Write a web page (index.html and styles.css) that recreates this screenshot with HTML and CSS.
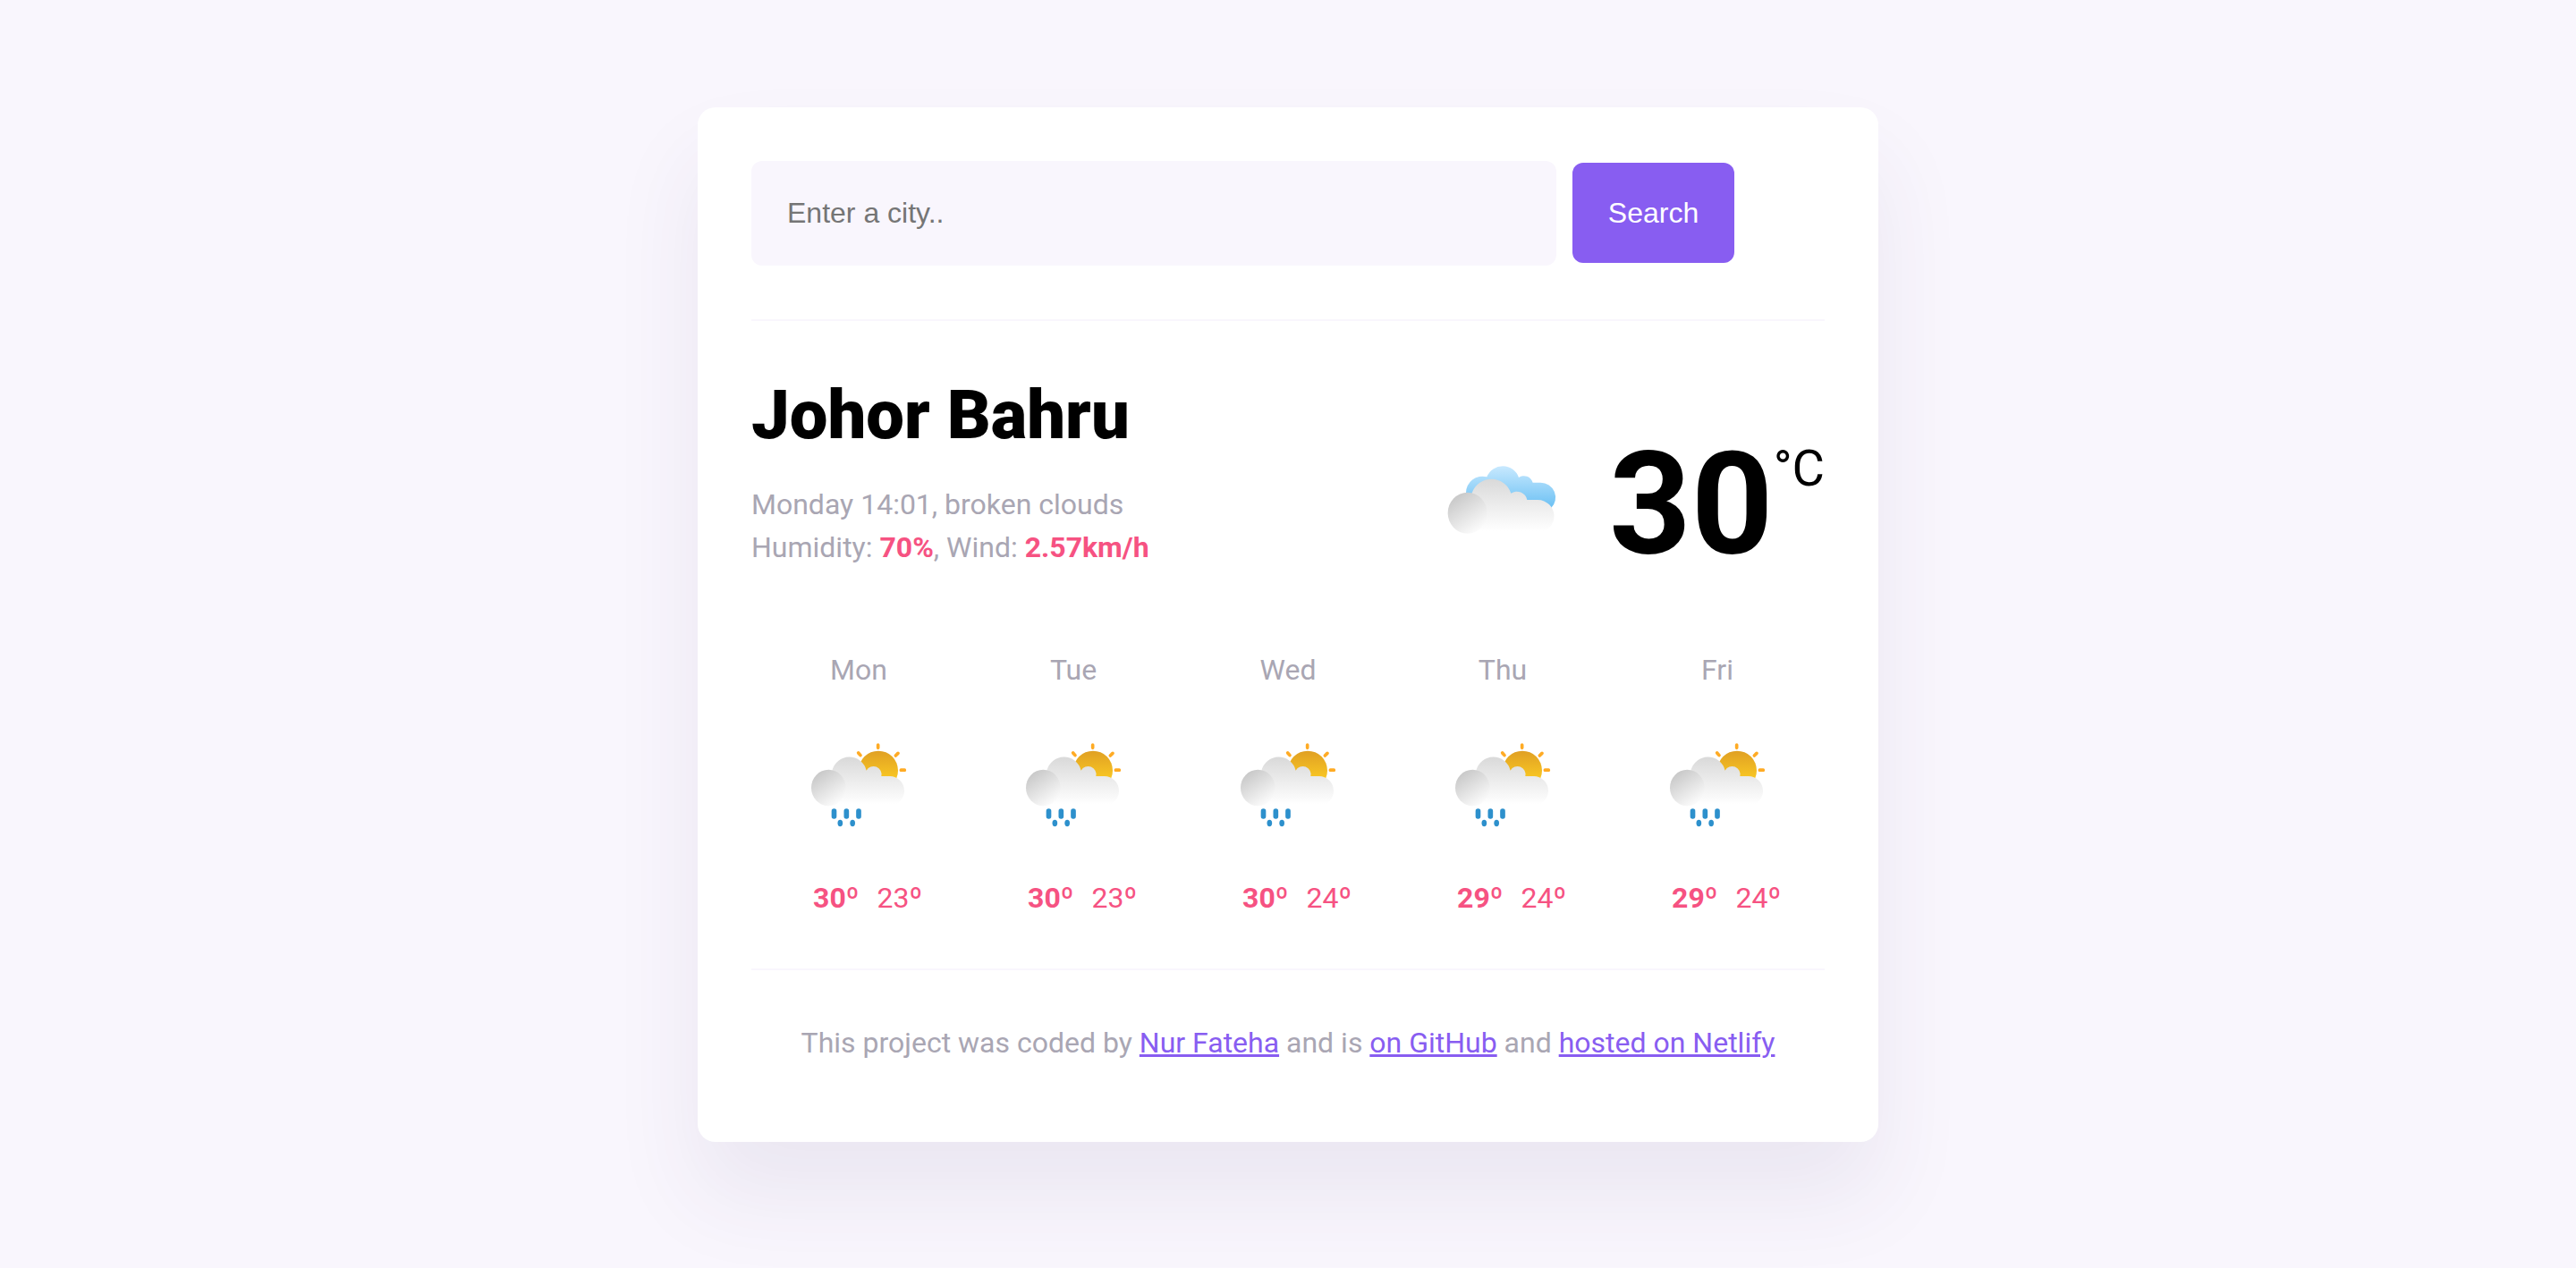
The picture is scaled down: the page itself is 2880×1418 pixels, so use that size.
FILE: index.html
```html
<!DOCTYPE html>
<html lang="en">
<head>
<meta charset="utf-8">
<title>Weather App</title>
<link rel="stylesheet" href="styles.css">
</head>
<body>
<svg class="defs" width="0" height="0" aria-hidden="true">
  <defs>
    <linearGradient id="puff" x1="0.2" y1="0.1" x2="0.75" y2="0.95"><stop offset="0" stop-color="#c9c9c9"/><stop offset="1" stop-color="#fcfcfc"/></linearGradient>
    <linearGradient id="cloud" gradientUnits="userSpaceOnUse" x1="0" y1="142" x2="0" y2="318"><stop offset="0" stop-color="#d9d9d9"/><stop offset="1" stop-color="#fff"/></linearGradient>
    <linearGradient id="cloud-small" gradientUnits="userSpaceOnUse" x1="0" y1="110" x2="0" y2="268"><stop offset="0" stop-color="#d9d9d9"/><stop offset="1" stop-color="#fff"/></linearGradient>
    <linearGradient id="sky" gradientUnits="userSpaceOnUse" x1="0" y1="92" x2="0" y2="245"><stop offset="0" stop-color="#cdebff"/><stop offset="1" stop-color="#68bff3"/></linearGradient>
    <linearGradient id="sun" gradientUnits="userSpaceOnUse" x1="0" y1="89" x2="0" y2="180"><stop offset="0" stop-color="#e0a023"/><stop offset="1" stop-color="#f8c624"/></linearGradient>
    <symbol id="shower" viewBox="0 0 480 390">
      <g stroke="#ffab24" stroke-width="11" stroke-linecap="round">
        <path d="M305 69V79M239 96L246 104M372 97L364 105M382 153.500H394"/>
      </g>
      <circle cx="306" cy="155" r="66" fill="url(#sun)"/>
      <path fill="url(#cloud-small)" d="M139 272V213L151 156A59 59 0 0 1 266 155A27 27 0 0 1 316 174H344A49 49 0 0 1 344 272Z"/>
      <ellipse cx="139" cy="213" rx="58" ry="60.500" fill="url(#puff)"/>
      <g fill="#2d90cc">
        <rect x="149" y="283" width="17" height="34" rx="8"/>
        <rect x="190.500" y="283" width="17" height="34" rx="8"/>
        <rect x="231.500" y="283" width="17" height="34" rx="8"/>
        <ellipse cx="178" cy="331.500" rx="8.500" ry="11"/>
        <ellipse cx="219.500" cy="331.500" rx="8.500" ry="11"/>
      </g>
    </symbol>
  </defs>
</svg>
<main class="weather-app">
  <form class="search-form">
    <input class="search-input" type="search" placeholder="Enter a city..">
    <button class="search-button" type="button">Search</button>
  </form>
  <section class="current">
    <div>
      <h1 class="city">Johor Bahru</h1>
      <p class="details">Monday 14:01, broken clouds<br>Humidity: <strong>70%</strong>, Wind: <strong>2.57km/h</strong></p>
    </div>
    <div class="temperature">
      <svg class="icon" viewBox="0 0 480 390">
        <path fill="url(#sky)" d="M150 242L117 190A55 55 0 0 1 187 136A57 57 0 0 1 294 138A31 31 0 0 1 341 155H367A50 50 0 0 1 402 241Z"/>
        <path fill="url(#cloud)" d="M122 322V257L137 190A69 69 0 0 1 268 191A35 35 0 0 1 322 213H358A54.500 54.500 0 0 1 358 322Z"/>
        <ellipse cx="122" cy="257" rx="66" ry="69" fill="url(#puff)"/>
      </svg>
      <span class="value">30</span><span class="unit">°C</span>
    </div>
  </section>
  <section class="forecast">
    <div class="day"><div class="day-name">Mon</div><svg class="icon"><use href="#shower"/></svg><div class="range"><strong>30º</strong><span>23º</span></div></div>
    <div class="day"><div class="day-name">Tue</div><svg class="icon"><use href="#shower"/></svg><div class="range"><strong>30º</strong><span>23º</span></div></div>
    <div class="day"><div class="day-name">Wed</div><svg class="icon"><use href="#shower"/></svg><div class="range"><strong>30º</strong><span>24º</span></div></div>
    <div class="day"><div class="day-name">Thu</div><svg class="icon"><use href="#shower"/></svg><div class="range"><strong>29º</strong><span>24º</span></div></div>
    <div class="day"><div class="day-name">Fri</div><svg class="icon"><use href="#shower"/></svg><div class="range"><strong>29º</strong><span>24º</span></div></div>
  </section>
  <footer class="credits">This project was coded by <a href="#">Nur Fateha</a> and is <a href="#">on GitHub</a> and <a href="#">hosted on Netlify</a></footer>
</main>
</body>
</html>
```
FILE: styles.css
```css
* { box-sizing: border-box; }

body {
  min-height: 100vh;
  margin: 0;
  padding-top: 120px;
  background: #f9f6fd;
  font-family: Roboto, sans-serif;
  font-size: 32px;
  line-height: 48px;
}

.defs { position: absolute; }

.weather-app {
  width: 1320px;
  height: 1157px;
  margin: 0 auto;
  padding: 60px;
  background: #fff;
  border-radius: 20px;
  box-shadow: 0 60px 100px rgba(65, 50, 100, 0.08);
}

.search-form {
  display: flex;
  align-items: flex-start;
  gap: 18px;
  padding-bottom: 60px;
  border-bottom: 2px solid #f9f6fd;
}

.search-input,
.search-button {
  border: 0;
  border-radius: 12px;
  font-family: "Liberation Sans", Arial, sans-serif;
  font-size: 32px;
}

.search-input {
  width: 900px;
  height: 117px;
  padding: 0 40px;
  background: #f9f6fd;
  appearance: none;
}

.search-input::placeholder { color: #757575; }

.search-button {
  width: 181px;
  height: 112px;
  margin-top: 2px;
  padding: 0;
  background: #885df1;
  color: #fff;
}

.current {
  display: flex;
  justify-content: space-between;
  height: 278px;
  padding-top: 59px;
}

.city {
  margin: 1px 0 31px;
  font-size: 76px;
  font-weight: 900;
  line-height: 90px;
}

.details {
  margin: 0;
  color: #a9a6b3;
}

.details strong,
.range { color: #f65282; }

.icon {
  display: block;
  width: 160px;
  height: 130px;
}

.temperature {
  display: flex;
  align-items: flex-start;
  padding-top: 66px;
}

.temperature .icon { margin: 4px 39px 0 0; }

.value {
  font-size: 160px;
  font-weight: 700;
  line-height: 160px;
}

.unit {
  margin-top: 12px;
  font-size: 56px;
  line-height: 56px;
}

.forecast {
  display: grid;
  grid-template-columns: repeat(5, 1fr);
  padding: 88px 0 55px;
  border-bottom: 2px solid #f9f6fd;
}

.day {
  display: flex;
  flex-direction: column;
  align-items: center;
}

.day .icon { margin: 37px 0 40px; }

.day-name { color: #a9a6b3; }

.range {
  display: flex;
  gap: 20px;
  padding-left: 20px;
}

.credits {
  padding-top: 57px;
  color: #a9a6b3;
  text-align: center;
}

.credits a {
  color: #885df1;
  text-decoration-thickness: 3px;
  text-underline-offset: 2px;
}
```
